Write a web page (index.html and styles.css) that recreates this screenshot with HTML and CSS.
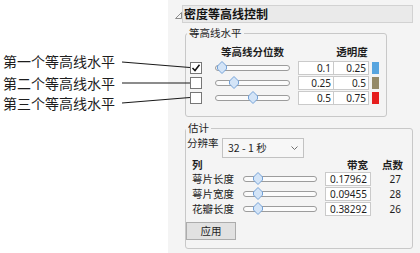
FILE: index.html
```html
<!DOCTYPE html>
<html lang="zh-CN">
<head>
<meta charset="utf-8">
<title>密度等高线控制</title>
<link rel="stylesheet" href="styles.css">
</head>
<body>
<div class="page">
  <div class="callouts">
    <div class="callout c1">第一个等高线水平</div>
    <div class="callout c2">第二个等高线水平</div>
    <div class="callout c3">第三个等高线水平</div>
  </div>
  <div class="panel">
    <div class="head">
      <svg class="disc" width="7" height="18" viewBox="0 0 7 18"><path d="M6.5 7.5 L6.5 13.5 L0.5 13.5 Z" fill="none" stroke="#8c8c8c" stroke-width="1"/></svg>
      <div class="titlebar">密度等高线控制</div>
    </div>

    <fieldset class="group g1">
      <legend>等高线水平</legend>
      <div class="g1-inner">
        <div class="lv-head">
          <span class="sp-cb"></span>
          <span class="h-q">等高线分位数</span>
          <span class="sp-b1"></span>
          <span class="h-a">透明度</span>
        </div>
        <div class="lv-row">
          <span class="cb"><svg width="10" height="10" viewBox="0 0 10 10"><path d="M1.5 5 L4 7.5 L8.5 1.8" fill="none" stroke="#111" stroke-width="1.5"/></svg></span>
          <div class="slider s1"><span class="thumb" style="left:6px"><svg width="10" height="13" viewBox="0 0 10 13"><path d="M5 0.5 L9.5 5 L9.5 8 L5 12.5 L0.5 8 L0.5 5 Z" fill="#d3e4f7" stroke="#74a2d8" stroke-width="1"/></svg></span></div>
          <span class="box b1">0.1</span><span class="box b2">0.25</span><span class="swatch sw-blue"></span>
        </div>
        <div class="lv-row">
          <span class="cb"></span>
          <div class="slider s1"><span class="thumb" style="left:18px"><svg width="10" height="13" viewBox="0 0 10 13"><path d="M5 0.5 L9.5 5 L9.5 8 L5 12.5 L0.5 8 L0.5 5 Z" fill="#d3e4f7" stroke="#74a2d8" stroke-width="1"/></svg></span></div>
          <span class="box b1">0.25</span><span class="box b2">0.5</span><span class="swatch sw-brown"></span>
        </div>
        <div class="lv-row">
          <span class="cb"></span>
          <div class="slider s1"><span class="thumb" style="left:37px"><svg width="10" height="13" viewBox="0 0 10 13"><path d="M5 0.5 L9.5 5 L9.5 8 L5 12.5 L0.5 8 L0.5 5 Z" fill="#d3e4f7" stroke="#74a2d8" stroke-width="1"/></svg></span></div>
          <span class="box b1">0.5</span><span class="box b2">0.75</span><span class="swatch sw-red"></span>
        </div>
      </div>
    </fieldset>

    <fieldset class="group g2">
      <legend>估计</legend>
      <div class="g2-inner">
        <div class="res-row">
          <span class="res-label">分辨率</span>
          <div class="select"><span>32 - 1 秒</span><svg width="7" height="4" viewBox="0 0 7 4"><path d="M0.5 0.5 L3.5 3.5 L6.5 0.5" fill="none" stroke="#707070" stroke-width="1"/></svg></div>
        </div>
        <div class="bw-table">
          <div class="bw-head">
            <span class="c-name">列</span>
            <span class="c-slider"></span>
            <span class="c-box h-right">带宽</span>
            <span class="c-count h-right">点数</span>
          </div>
          <div class="bw-row">
            <span class="c-name">萼片长度</span>
            <div class="c-slider"><div class="slider s2"><span class="thumb" style="left:14px"><svg width="10" height="13" viewBox="0 0 10 13"><path d="M5 0.5 L9.5 5 L9.5 8 L5 12.5 L0.5 8 L0.5 5 Z" fill="#d3e4f7" stroke="#74a2d8" stroke-width="1"/></svg></span></div></div>
            <span class="c-box"><span class="box bw">0.17962</span></span>
            <span class="c-count num">27</span>
          </div>
          <div class="bw-row">
            <span class="c-name">萼片宽度</span>
            <div class="c-slider"><div class="slider s2"><span class="thumb" style="left:14px"><svg width="10" height="13" viewBox="0 0 10 13"><path d="M5 0.5 L9.5 5 L9.5 8 L5 12.5 L0.5 8 L0.5 5 Z" fill="#d3e4f7" stroke="#74a2d8" stroke-width="1"/></svg></span></div></div>
            <span class="c-box"><span class="box bw">0.09455</span></span>
            <span class="c-count num">28</span>
          </div>
          <div class="bw-row">
            <span class="c-name">花瓣长度</span>
            <div class="c-slider"><div class="slider s2"><span class="thumb" style="left:14px"><svg width="10" height="13" viewBox="0 0 10 13"><path d="M5 0.5 L9.5 5 L9.5 8 L5 12.5 L0.5 8 L0.5 5 Z" fill="#d3e4f7" stroke="#74a2d8" stroke-width="1"/></svg></span></div></div>
            <span class="c-box"><span class="box bw">0.38292</span></span>
            <span class="c-count num">26</span>
          </div>
        </div>
        <button class="apply" type="button">应用</button>
      </div>
    </fieldset>
  </div>

  <svg class="leaders" width="420" height="253" viewBox="0 0 420 253">
    <line x1="122" y1="62" x2="190" y2="67.5" stroke="#1a1a1a" stroke-width="1.1"/>
    <line x1="122" y1="83" x2="190" y2="83" stroke="#1a1a1a" stroke-width="1.1"/>
    <line x1="122" y1="103" x2="190" y2="97.5" stroke="#1a1a1a" stroke-width="1.1"/>
  </svg>
</div>
</body>
</html>
```

FILE: styles.css
```css
* { box-sizing: border-box; }

html, body {
  margin: 0;
  padding: 0;
  background: #ffffff;
}

body {
  width: 420px;
  height: 253px;
  overflow: hidden;
  font-family: "Noto Sans CJK SC", "Noto Sans", sans-serif;
  color: #1e1e1e;
}

.page {
  position: relative;
  display: flex;
  width: 420px;
  height: 253px;
}

/* left annotation labels */
.callouts {
  width: 168px;
  flex: none;
  padding: 51px 0 0 3px;
}
.callout {
  font-size: 14px;
  line-height: 20px;
  height: 20px;
  color: #1e1e1e;
  white-space: nowrap;
}
.callout.c2 { margin-top: 2px; }

.leaders {
  position: absolute;
  left: 0;
  top: 0;
  pointer-events: none;
}

/* right panel */
.panel {
  flex: 1;
  height: 253px;
  background: #f4f4f4;
  padding: 5px 7px 0 7px;
}

.head {
  display: flex;
  align-items: flex-start;
  height: 18px;
}
.disc { flex: none; display: block; }
.titlebar {
  flex: 1;
  height: 18px;
  background: #eaeaea;
  border: 1px solid #d2d2d2;
  font-size: 12px;
  font-weight: bold;
  line-height: 16px;
  padding-left: 1px;
  color: #141414;
}

.group {
  margin: 0;
  padding: 0;
  border: 1px solid #c8c8c8;
  border-radius: 3px;
  min-width: 0;
  margin-left: 10px;
}
.group legend {
  font-size: 10.5px;
  line-height: 14px;
  padding: 0 2px;
  color: #1e1e1e;
}
.g1 {
  width: 202px;
  margin-top: 3px;
}
.g1 legend { margin-left: 1px; }
.g2 {
  width: 228px;
  margin-top: 4px;
}

/* contour levels */
.g1-inner {
  padding: 5px 0 11px 4px;
}
.lv-head {
  display: flex;
  height: 15px;
  font-size: 10.5px;
  font-weight: bold;
  line-height: 14px;
}
.sp-cb { width: 25px; flex: none; }
.h-q { width: 75px; text-align: center; flex: none; }
.sp-b1 { width: 44px; flex: none; }
.h-a { width: 36px; text-align: center; flex: none; }

.lv-row {
  display: flex;
  align-items: center;
  height: 15px;
}
.cb {
  width: 12px;
  height: 12px;
  flex: none;
  border: 1px solid #777;
  background: #fff;
  display: flex;
  align-items: center;
  justify-content: center;
}
.cb svg { display: block; }

.slider {
  position: relative;
  height: 6px;
  border: 1px solid #9c9c9c;
  border-radius: 3px;
  background: #fbfbfb;
  flex: none;
}
.s1 { width: 75px; margin-left: 13px; }
.s2 { width: 74px; }
.thumb {
  position: absolute;
  top: -4.5px;
  margin-left: -5px;
  width: 10px;
  height: 13px;
}
.thumb svg { display: block; }

.box {
  height: 14px;
  background: #ffffff;
  border: 1px solid #cacaca;
  font-family: "Noto Sans", "Noto Sans CJK SC", sans-serif;
  font-size: 10px;
  line-height: 12px;
  text-align: right;
  padding-right: 2px;
  flex: none;
  color: #1e1e1e;
}
.b1 { width: 36px; margin-left: 8px; }
.b2 { width: 36px; margin-left: -1px; }
.swatch {
  width: 7px;
  height: 12px;
  margin-left: 3px;
  flex: none;
}
.sw-blue { background: #58a5df; }
.sw-brown { background: #958a68; }
.sw-red { background: #e61e1e; }

/* estimate */
.g2-inner {
  padding: 3px 0 8px 1px;
}
.res-row {
  display: flex;
  align-items: flex-start;
  height: 20px;
}
.res-label {
  width: 35px;
  flex: none;
  font-size: 10.5px;
  line-height: 10px;
}
.select {
  width: 82px;
  height: 20px;
  border: 1px solid #c2c2c2;
  background: #f7f7f7;
  display: flex;
  align-items: center;
  justify-content: space-between;
  padding: 0 5px 0 5px;
  font-size: 10.5px;
  line-height: 18px;
}
.select svg { display: block; }

.bw-table {
  margin-left: 5px;
}
.bw-head {
  display: flex;
  height: 13px;
  font-size: 10.5px;
  font-weight: bold;
  line-height: 13px;
}
.bw-row {
  display: flex;
  align-items: center;
  height: 15px;
  font-size: 10.5px;
}
.c-name { width: 51px; flex: none; white-space: nowrap; }
.c-slider { width: 82px; flex: none; display: flex; align-items: center; }
.c-box { width: 46px; flex: none; }
.c-count { width: 32px; flex: none; }
.h-right { text-align: right; }
.bw-head .c-box { padding-right: 3px; }
.box.bw { display: block; width: 46px; padding-right: 3px; }
.num {
  font-family: "Noto Sans", "Noto Sans CJK SC", sans-serif;
  font-size: 10px;
  text-align: right;
  padding-right: 2px;
}

.apply {
  display: block;
  margin: 6px 0 0 -1px;
  width: 50px;
  height: 18px;
  padding: 0;
  background: #e1e1e1;
  border: 1px solid #acacac;
  border-radius: 0;
  font-family: "Noto Sans CJK SC", sans-serif;
  font-size: 10.5px;
  line-height: 16px;
  color: #1e1e1e;
}
```
